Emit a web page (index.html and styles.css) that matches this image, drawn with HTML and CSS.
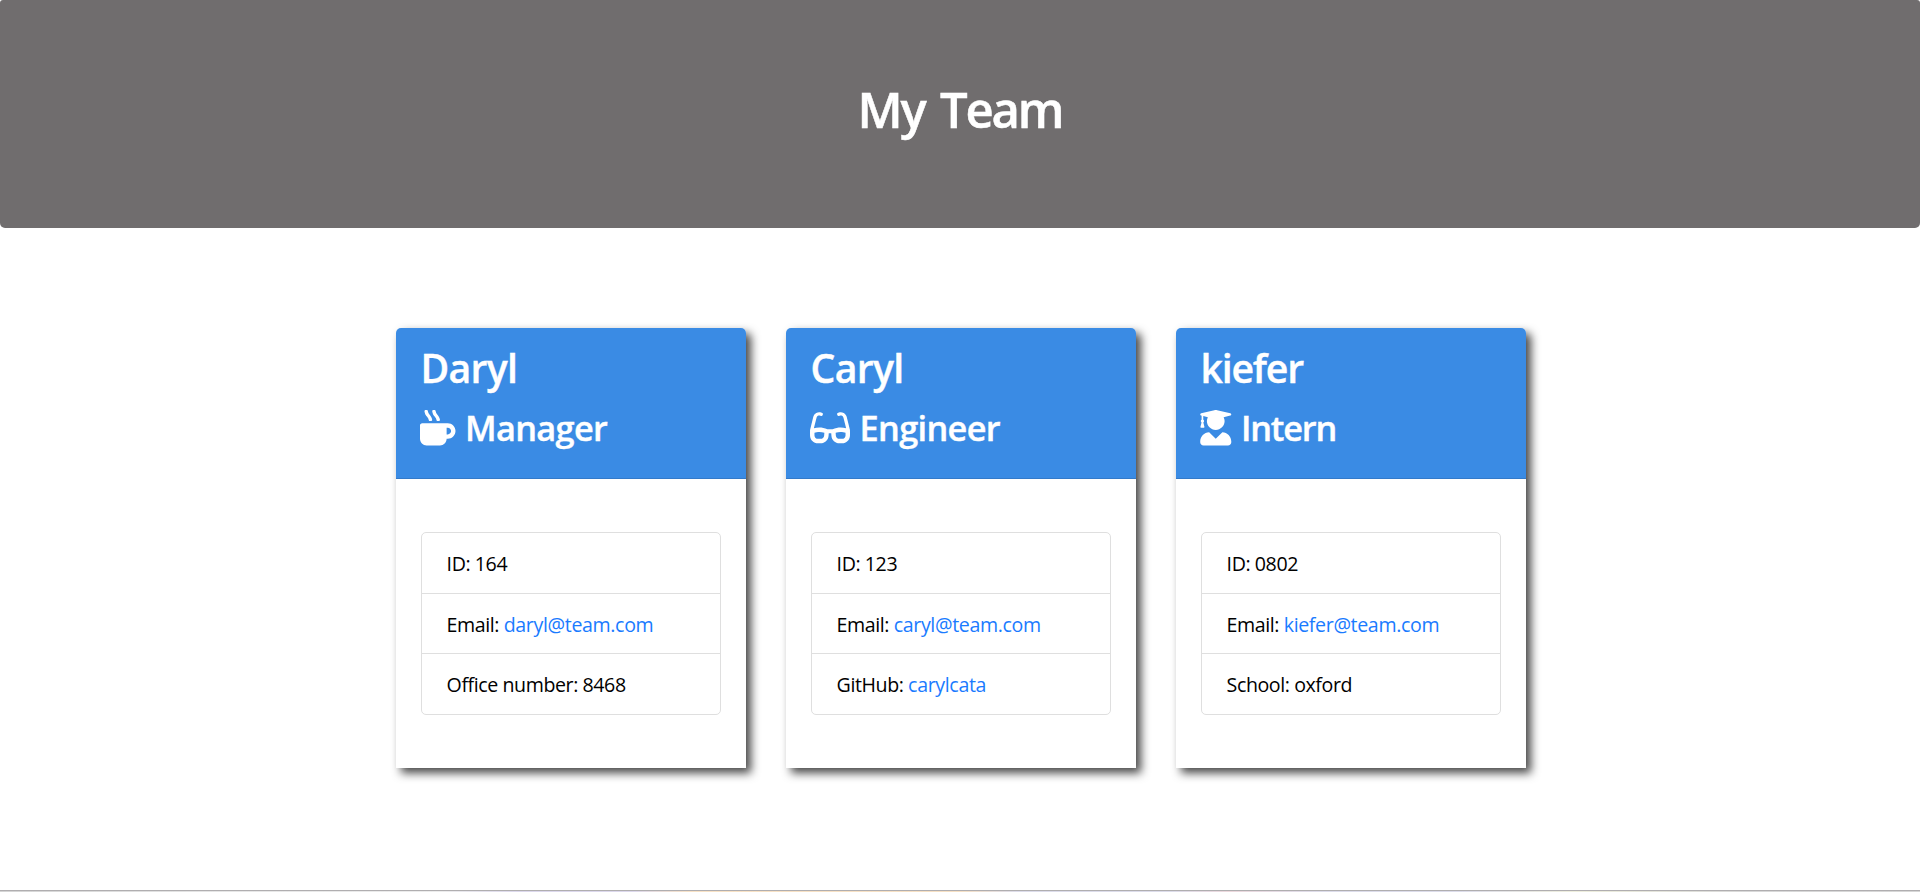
FILE: index.html
```html
<!DOCTYPE html>
<html lang="en">
<head>
<meta charset="utf-8">
<title>My Team</title>
<link rel="stylesheet" href="styles.css">
</head>
<body>
<header class="banner"><h1 class="banner-title">My Team</h1></header>
<main class="team">
  <section class="card">
    <div class="card-header">
      <h2 class="name">Daryl</h2>
      <h3 class="role"><svg class="icon" viewBox="0 0 512 512"><path d="M127.1 146.5c1.3 7.7 8 13.5 16 13.5h16.5c9.8 0 17.6-8.5 16.3-18-3.8-28.2-16.4-54.2-36.6-74.7-14.4-14.7-23.6-33.3-26.4-53.5C111.8 5.9 105 0 96.8 0H80.4C70.6 0 63 8.5 64.1 18c3.9 31.9 18 61.3 40.6 84.4 12 12.2 19.7 27.5 22.4 44.1zm112 0c1.3 7.7 8 13.5 16 13.5h16.5c9.8 0 17.6-8.5 16.3-18-3.8-28.2-16.4-54.2-36.6-74.7-14.4-14.7-23.6-33.3-26.4-53.5C223.8 5.9 217 0 208.8 0h-16.4c-9.8 0-17.5 8.5-16.3 18 3.9 31.9 18 61.3 40.6 84.4 12 12.2 19.7 27.5 22.4 44.1zM400 192H32c-17.7 0-32 14.3-32 32v192c0 53 43 96 96 96h192c53 0 96-43 96-96h16c61.8 0 112-50.2 112-112s-50.2-112-112-112zm0 160h-16v-96h16c26.5 0 48 21.5 48 48s-21.5 48-48 48z"/></svg><span>Manager</span></h3>
    </div>
    <div class="card-body">
      <ul class="details">
        <li>ID: 164</li>
        <li>Email: <a href="mailto:daryl@team.com">daryl@team.com</a></li>
        <li>Office number: 8468</li>
      </ul>
    </div>
  </section>
  <section class="card">
    <div class="card-header">
      <h2 class="name">Caryl</h2>
      <h3 class="role"><svg class="icon icon-wide" viewBox="0 0 576 512"><path d="M574.1 280.37L528.75 98.66c-5.91-23.7-21.59-44.05-43-55.81-21.44-11.73-46.97-14.11-70.19-6.33l-15.25 5.08c-8.39 2.79-12.92 11.86-10.12 20.24l5.06 15.18c2.79 8.38 11.85 12.91 20.23 10.12l13.18-4.39c10.87-3.62 23-3.57 33.16 1.73 10.29 5.37 17.57 14.56 20.37 25.82l38.46 153.82c-22.19-6.81-49.79-12.46-81.2-12.46-34.77 0-73.98 7.02-114.85 26.74h-73.18c-40.87-19.74-80.08-26.75-114.86-26.75-31.42 0-59.02 5.65-81.21 12.46l38.46-153.83c2.79-11.25 10.09-20.45 20.38-25.81 10.16-5.3 22.28-5.35 33.15-1.73l13.17 4.39c8.38 2.79 17.44-1.74 20.23-10.12l5.06-15.18c2.8-8.38-1.73-17.45-10.12-20.24l-15.25-5.08c-23.22-7.78-48.75-5.41-70.19 6.33-21.41 11.77-37.09 32.11-43 55.8L1.9 280.37A64.218 64.218 0 0 0 0 295.86v70.25C0 429.01 51.58 480 115.2 480h37.12c60.28 0 110.37-45.94 114.88-105.37l2.93-38.63h35.75l2.93 38.63C313.31 434.06 363.4 480 423.68 480h37.12c63.62 0 115.2-50.99 115.2-113.88v-70.25c0-5.23-.64-10.43-1.9-15.5zm-370.72 89.42c-1.97 25.91-24.4 46.21-51.06 46.21H115.2C86.97 416 64 393.62 64 366.11v-37.54c18.12-6.49 43.42-12.92 72.58-12.92 23.86 0 47.26 4.33 69.93 12.92l-3.13 41.22zM512 366.12c0 27.51-22.97 49.88-51.2 49.88h-37.12c-26.67 0-49.1-20.3-51.06-46.21l-3.13-41.22c22.67-8.59 46.08-12.92 69.95-12.92 29.12 0 54.43 6.44 72.55 12.93v37.54z"/></svg><span>Engineer</span></h3>
    </div>
    <div class="card-body">
      <ul class="details">
        <li>ID: 123</li>
        <li>Email: <a href="mailto:caryl@team.com">caryl@team.com</a></li>
        <li>GitHub: <a href="#">carylcata</a></li>
      </ul>
    </div>
  </section>
  <section class="card">
    <div class="card-header">
      <h2 class="name name-tight">kiefer</h2>
      <h3 class="role role-tight"><svg class="icon icon-narrow" viewBox="0 0 448 512"><path d="M319.4 320.6L224 416l-95.4-95.4C57.1 323.7 0 382.2 0 454.4v9.6c0 26.5 21.5 48 48 48h352c26.5 0 48-21.5 48-48v-9.6c0-72.2-57.1-130.7-128.6-133.8zM13.6 79.8l6.4 1.5v58.4c-7 4.2-12 11.5-12 20.3 0 8.4 4.6 15.4 11.1 19.7L3.5 242c-1.7 6.9 2.1 14 7.6 14h41.8c5.5 0 9.3-7.1 7.6-14l-15.6-62.3C51.4 175.4 56 168.4 56 160c0-8.8-5-16.1-12-20.3V87.1l66 15.9c-8.6 17.2-14 36.4-14 57 0 70.7 57.3 128 128 128s128-57.3 128-128c0-20.6-5.3-39.8-14-57l96.3-23.2c18.2-4.4 18.2-27.1 0-31.5l-190.4-46c-13-3.1-26.7-3.1-39.9 0L13.6 48.2c-18.1 4.4-18.1 27.1 0 31.6z"/></svg><span>Intern</span></h3>
    </div>
    <div class="card-body">
      <ul class="details">
        <li>ID: 0802</li>
        <li>Email: <a href="mailto:kiefer@team.com">kiefer@team.com</a></li>
        <li>School: oxford</li>
      </ul>
    </div>
  </section>
</main>
<footer class="strip"></footer>
</body>
</html>
```

FILE: styles.css
```css
* { box-sizing: border-box; }

body {
  margin: 0;
  height: 892px;
  display: flex;
  flex-direction: column;
  overflow: hidden;
  background: #fff;
  color: #000;
  font: 19.6px/30px "Open Sans", "Noto Sans", sans-serif;
  letter-spacing: -0.42px;
}

h1, h2, h3, ul { margin: 0; padding: 0; }

.banner {
  height: 228px;
  padding-top: 79px;
  background: #706d6e;
  border-radius: 3px 3px 5px 5px;
  text-align: center;
}

.banner-title {
  color: #fff;
  font-size: 49px;
  font-weight: 600;
  line-height: 60px;
  letter-spacing: -2.2px;
  word-spacing: 5px;
  -webkit-text-stroke: 0.5px #fff;
}

.team {
  flex: 1;
  display: flex;
  justify-content: center;
  align-items: flex-start;
  gap: 40px;
  padding: 100px 0 0 2px;
}

.card {
  width: 350px;
  height: 440px;
  background: #fff;
  border-radius: 5px 5px 0 0;
  box-shadow: 5px 5px 10px rgba(0, 0, 0, 0.73);
}

.card-header {
  height: 151px;
  padding: 16px 24px 0;
  background: #3a8be4;
  border-bottom: 1px solid #337ac9;
  border-radius: 5px 5px 0 0;
  color: #fff;
}

.name {
  padding-left: 0.5px;
  font-size: 39.2px;
  font-weight: 600;
  line-height: 48px;
  letter-spacing: -0.7px;
  -webkit-text-stroke: 0.4px #fff;
}

.name-tight { letter-spacing: -1.2px; }

.role {
  display: flex;
  align-items: center;
  gap: 9.5px;
  margin-top: 15px;
  font-size: 34.3px;
  font-weight: 600;
  line-height: 42px;
  letter-spacing: -0.65px;
  -webkit-text-stroke: 0.4px #fff;
}

.role-tight { letter-spacing: -1.2px; }

.icon {
  width: 35.5px;
  height: 35.5px;
  fill: #fff;
}

.icon-wide { width: 40px; }
.icon-narrow { width: 31.5px; }

.card-body { padding: 53px 25px 0; }

.details {
  height: 183px;
  display: grid;
  grid-template-rows: 60px 60px 61px;
  border: 1px solid #dfdfdf;
  border-radius: 5px;
  list-style: none;
}

.details li {
  display: flex;
  align-items: center;
  padding: 2px 0 0 24.6px;
  white-space: pre;
}

.details li + li { border-top: 1px solid #dfdfdf; }

.details a {
  color: #1a7bff;
  letter-spacing: -0.36px;
  text-decoration: none;
}

.strip {
  height: 2px;
  border-top: 1px solid #b0aeb0;
  background: linear-gradient(90deg, #d4d4d4 0%, #e6e6e6 12%, #ececec 23%, #dcd8ec 27%, #dcd8ec 33%, #f8e2c6 36%, #f6e0c4 50%, #dcdcea 53%, #dcdcea 61%, #ecd8dc 64%, #dcdcea 69%, #dcdcea 76%, #eeeedd 82%, #d8d8d8 91%, #d6d6d6 100%);
}
```
